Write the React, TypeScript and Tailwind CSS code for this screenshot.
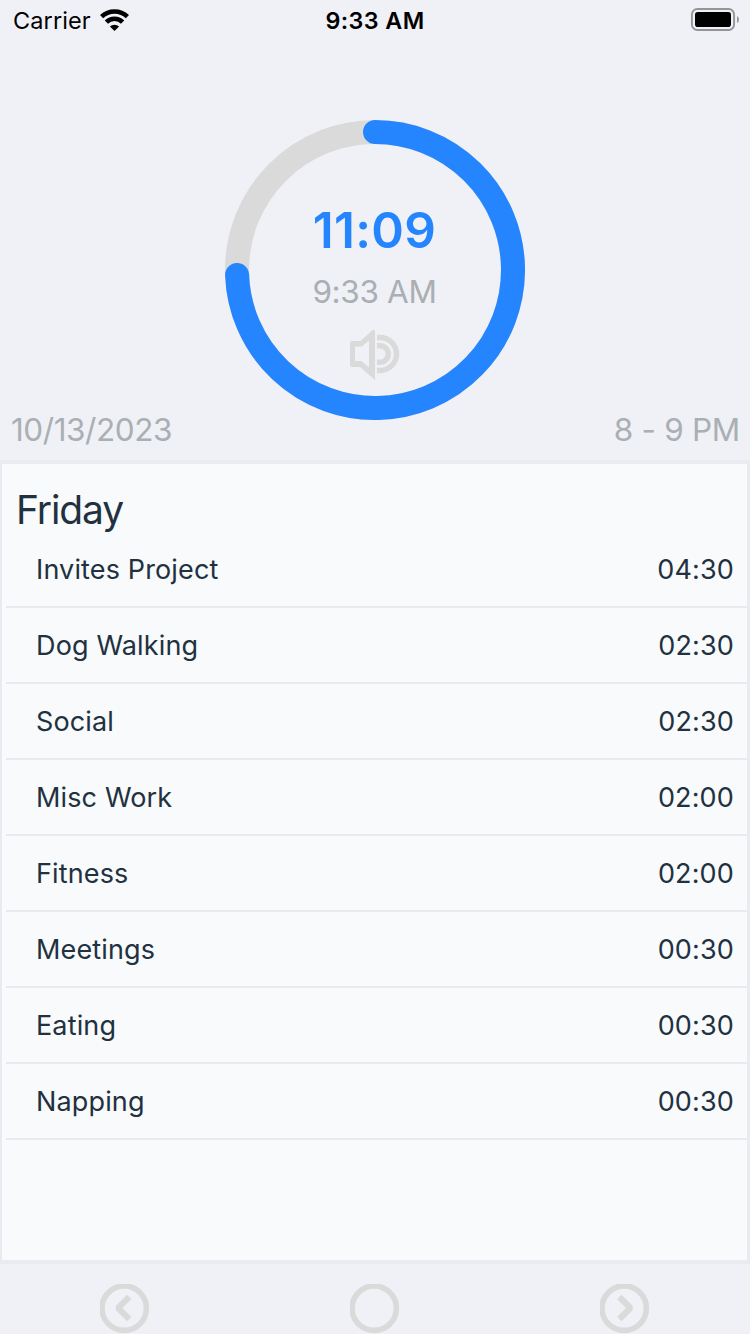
import React from "react";

const ENTRIES = [
  { name: "Invites Project", time: "04:30" },
  { name: "Dog Walking", time: "02:30" },
  { name: "Social", time: "02:30" },
  { name: "Misc Work", time: "02:00" },
  { name: "Fitness", time: "02:00" },
  { name: "Meetings", time: "00:30" },
  { name: "Eating", time: "00:30" },
  { name: "Napping", time: "00:30" },
];

function WifiIcon() {
  return (
    <svg className="ml-[9px] mt-[9px] h-[22px] w-[30px] shrink-0" viewBox="0 0 30 22">
      <g fill="none" stroke="#000" strokeWidth="4.6">
        <path d="M1.6 7.7 A18.6 18.6 0 0 1 27.4 7.7" />
        <path d="M6.4 13.2 A11.4 11.4 0 0 1 22.6 13.2" />
      </g>
      <path d="M14.5 22 L9.9 17.5 A6.6 6.6 0 0 1 19.1 17.5 Z" />
    </svg>
  );
}

function BatteryIcon() {
  return (
    <svg className="mt-[8px] h-[24px] w-[50px]" viewBox="0 0 50 24">
      <rect x="1.9" y="1" width="42.2" height="21" rx="5.4" fill="none" stroke="#949598" strokeWidth="1.9" />
      <rect x="5" y="4" width="36" height="15" rx="2.8" />
      <path d="M47 8 Q49 9 49 11.5 Q49 14 47 15 Z" fill="#949598" />
    </svg>
  );
}

function StatusBar() {
  return (
    <header className="grid h-[40px] grid-cols-3 text-black">
      <div className="flex pl-[13px]">
        <span className="w-[78px] whitespace-nowrap text-[23.5px] leading-[42px] tracking-[0.1px]">Carrier</span>
        <WifiIcon />
      </div>
      <div className="text-center text-[23.3px] font-semibold leading-[42px] tracking-[0.4px]">9:33 AM</div>
      <div className="flex justify-end pr-[10px]">
        <BatteryIcon />
      </div>
    </header>
  );
}

function SpeakerIcon() {
  return (
    <svg className="h-[50px] w-[50px]" viewBox="0 0 50 50">
      <path
        fill="#dadada"
        fillRule="evenodd"
        d="M2 11 H10.5 L22.5 0 H25 V50 L10 37 H2 Q0 37 0 35 V13 Q0 11 2 11 Z M5 16.5 V31 H11.5 L19 37.5 V10.5 L12 16.5 Z"
      />
      <g fill="none" stroke="#dadada" strokeWidth="5.4">
        <path d="M27 7.5 H30 A16.5 16.5 0 0 1 30 40.5 H27" />
        <path d="M27 15.7 H30 A8.3 8.3 0 0 1 30 32.3 H27" />
      </g>
    </svg>
  );
}

function NavIcon({ points }: { points?: string }) {
  return (
    <svg className="h-[50px] w-[50px]" viewBox="0 0 50 50" fill="none" stroke="#dadada">
      <circle cx="24.2" cy="24.2" r="22.2" strokeWidth="5.6" />
      {points && <polyline points={points} strokeWidth="6.2" strokeLinejoin="bevel" />}
    </svg>
  );
}

function TimerRing() {
  return (
    <div className="grid h-[300px] w-[300px]">
      <svg className="col-start-1 row-start-1 h-[300px] w-[300px]" viewBox="0 0 300 300" fill="none" strokeWidth="24">
        <circle cx="150" cy="150" r="138" stroke="#dadada" />
        <path d="M150 12 A138 138 0 1 1 12.1 155" stroke="#2585ff" strokeLinecap="round" />
      </svg>
      <div className="col-start-1 row-start-1 flex flex-col items-center">
        <div className="mt-[80px] h-[62px] whitespace-nowrap pr-[1px] text-[49.5px] font-semibold leading-[61px] tracking-[0.3px] text-[#2585ff]">11:09</div>
        <div className="mt-[10px] h-[40px] whitespace-nowrap pr-[1px] text-[31.5px] leading-[40px] tracking-[-0.35px] text-[#a9afb3]">9:33 AM</div>
        <div className="mt-[18px]">
          <SpeakerIcon />
        </div>
      </div>
    </div>
  );
}

export default function App() {
  return (
    <div className="flex h-[1334px] w-[750px] flex-col overflow-hidden bg-[#f0f1f6] font-['Inter',sans-serif]">
      <StatusBar />
      <section className="grid h-[420px] grid-cols-[225px_300px_225px] pt-[80px]">
        <div className="self-end whitespace-nowrap pb-[10px] pl-[11px] text-[31.5px] leading-[40px] tracking-[-0.45px] text-[#a9afb3]">10/13/2023</div>
        <TimerRing />
        <div className="self-end whitespace-nowrap pb-[10px] pr-[10px] text-right text-[31.5px] leading-[40px] tracking-[-0.3px] text-[#a9afb3]">8 - 9 PM</div>
      </section>
      <main className="h-[804px] border-y-4 border-r-[3px] border-l-2 border-y-[#e8ebf0] border-l-[#e9eaf1] border-r-[#e8ebf0] bg-[#f8fafc] pl-[4px] text-[#22313f]">
        <h1 className="h-[68px] pl-[10px] pt-[20px] text-[39px] leading-[51px] tracking-[-1.1px]">Friday</h1>
        <ul>
          {ENTRIES.map((e) => (
            <li
              key={e.name}
              className="flex h-[76px] items-center justify-between border-b-2 border-[#e8eaf0] pl-[30px] pr-[13px] pt-[2px] text-[27px] leading-[36px]"
            >
              <span className="tracking-[0.14px]">{e.name}</span>
              <span className="tracking-[0.15px]">{e.time}</span>
            </li>
          ))}
        </ul>
      </main>
      <nav className="flex justify-between pl-[100px] pr-[100px] pt-[20px]">
        <NavIcon points="29.2,13 18,24 29.2,35" />
        <NavIcon />
        <NavIcon points="19.3,13 30.5,24 19.3,35" />
      </nav>
    </div>
  );
}
